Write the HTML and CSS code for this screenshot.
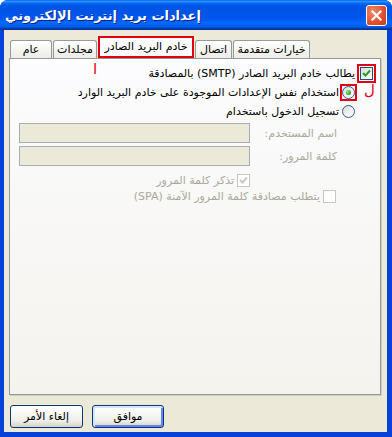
FILE: index.html
```html
<!DOCTYPE html>
<html lang="ar">
<head>
    <meta charset="utf-8">
    <title>إعدادات بريد إنترنت الإلكتروني</title>
    <link rel="stylesheet" href="styles.css">
</head>
<body>
    <div class="window">
        <div class="titlebar">
            <span class="title" dir="rtl">إعدادات بريد إنترنت الإلكتروني</span>
            <button class="close" aria-label="إغلاق">
                <svg width="13" height="13" viewBox="0 0 13 13">
                    <path d="M2.5 2.5 L10.5 10.5 M10.5 2.5 L2.5 10.5" stroke="#fff" stroke-width="2.2" stroke-linecap="square"/>
                </svg>
            </button>
        </div>
        <div class="client">
            <div class="tabs">
                <div class="tab tab-general">عام</div>
                <div class="tab tab-folders">مجلدات</div>
                <div class="tab tab-outgoing active">خادم البريد الصادر</div>
                <div class="tab tab-connection">اتصال</div>
                <div class="tab tab-advanced">خيارات متقدمة</div>
            </div>
            <div class="panel" dir="rtl">
                <span class="note note-alef">ا</span>
                <span class="note note-lam">ل</span>

                <div class="opt opt-check">
                    <span class="mark mark-check">
                        <span class="check">
                            <svg width="9" height="9" viewBox="0 0 9 9"><path d="M1 4 L3.5 6.5 L8 1.5" stroke="#21A121" stroke-width="2" fill="none"/></svg>
                        </span>
                    </span>
                    <span>يطالب خادم البريد الصادر (SMTP) بالمصادقة</span>
                </div>
                <div class="opt opt-radio">
                    <span class="mark mark-radio"><span class="radio on"></span></span>
                    <span>استخدام نفس الإعدادات الموجودة على خادم البريد الوارد</span>
                </div>
                <div class="opt opt-radio">
                    <span class="radio"></span>
                    <span>تسجيل الدخول باستخدام</span>
                </div>

                <div class="field field-user">
                    <span>اسم المستخدم:</span>
                    <span class="input"></span>
                </div>
                <div class="field field-pass">
                    <span>كلمة المرور:</span>
                    <span class="input"></span>
                </div>

                <div class="opt opt-sub opt-remember">
                    <span class="check disabled">
                        <svg width="9" height="9" viewBox="0 0 9 9"><path d="M1 4 L3.5 6.5 L8 1.5" stroke="#CAC8BB" stroke-width="2" fill="none"/></svg>
                    </span>
                    <span>تذكر كلمة المرور</span>
                </div>
                <div class="opt opt-sub opt-spa">
                    <span class="check"></span>
                    <span>يتطلب مصادقة كلمة المرور الآمنة (SPA)</span>
                </div>
            </div>
            <div class="buttons">
                <button class="btn btn-cancel">إلغاء الأمر</button>
                <button class="btn btn-ok">موافق</button>
            </div>
        </div>
    </div>
</body>
</html>
```

FILE: styles.css
```css
body {
    margin: 0;
    background: #ffffff;
    font-family: 'DejaVu Sans', Tahoma, sans-serif;
    font-size: 11px;
    color: #000000;
}

.window {
    width: 392px;
    height: 437px;
    display: flex;
    flex-direction: column;
    background: #0841d9;
    border-radius: 8px 8px 0 0;
    overflow: hidden;
}

.titlebar {
    height: 30px;
    flex: none;
    display: flex;
    align-items: center;
    justify-content: space-between;
    padding: 0 5px;
    background: linear-gradient(#0058ee 0%, #3593ff 4%, #288eff 6%, #127dff 8%, #036ffc 10%,
        #0262ee 14%, #0057e5 20%, #0054e3 24%, #0055eb 56%, #005bf5 66%, #026afe 76%,
        #0062ef 86%, #0052d6 92%, #0040ab 94%, #003092 100%);
}

.title {
    color: #ffffff;
    font-weight: bold;
    font-size: 13px;
    text-shadow: 1px 1px #0f1e89;
}

.close {
    width: 21px;
    height: 21px;
    padding: 0;
    display: flex;
    align-items: center;
    justify-content: center;
    border: 1px solid #ffffff;
    border-radius: 3px;
    background: radial-gradient(circle at 30% 30%, #f0896a, #e2542f 55%, #c4391c);
}

.client {
    flex: 1;
    margin: 0 5px 5px 4px;
    padding: 6px 6px 0 5px;
    background: #ece9d8;
    display: flex;
    flex-direction: column;
}

.tabs {
    height: 22px;
    display: flex;
    align-items: flex-end;
    gap: 1px;
    padding-left: 1px;
}

.tab {
    height: 18px;
    box-sizing: border-box;
    border: 1px solid #919b9c;
    border-bottom: none;
    border-radius: 3px 3px 0 0;
    background: linear-gradient(#ffffff, #ecebe6);
    display: flex;
    align-items: center;
    justify-content: center;
    white-space: nowrap;
}

.tab-general { width: 42px; }
.tab-folders { width: 44px; }
.tab-outgoing { width: 96px; }
.tab-connection { width: 37px; }
.tab-advanced { width: 77px; }

.tab.active {
    height: 22px;
    border: 2px solid #e4000f;
    border-radius: 0;
    background: #fcfcfe;
    padding-bottom: 2px;
}

.panel {
    position: relative;
    height: 337px;
    box-sizing: border-box;
    padding-top: 5px;
    border: 1px solid #919b9c;
    background: linear-gradient(#fcfcfe, #f4f3ee);
    box-shadow: 1px 1px 0 #d0cebf;
}

/* red annotation letters drawn over the screenshot */
.note {
    position: absolute;
    color: #e4000f;
    line-height: 1;
}

.note-alef {
    left: 83px;
    top: 3px;
    font-size: 15px;
}

.note-lam {
    right: 5px;
    top: 24px;
    font-size: 15px;
}

.opt {
    height: 19px;
    display: flex;
    align-items: center;
    gap: 3px;
    white-space: nowrap;
}

.opt-check { padding-right: 7px; gap: 5px; }
.opt-radio { padding-right: 25px; }

.mark {
    display: flex;
    flex: none;
    border: 2px solid #e4000f;
}

.mark-check {
    padding: 1px;
    margin: 0 -3px;
}

.mark-radio {
    margin: 0 -2px;
}

.check {
    width: 13px;
    height: 13px;
    box-sizing: border-box;
    flex: none;
    display: flex;
    align-items: center;
    justify-content: center;
    border: 1px solid #1c5180;
    background: linear-gradient(135deg, #dcdcd7, #ffffff);
}

.check.disabled {
    border-color: #cac8bb;
    background: #ffffff;
}

.radio {
    width: 13px;
    height: 13px;
    box-sizing: border-box;
    flex: none;
    display: flex;
    align-items: center;
    justify-content: center;
    border: 1px solid #2c5c93;
    border-radius: 50%;
    background: linear-gradient(135deg, #dcdcd7, #ffffff);
}

.radio.on::after {
    content: '';
    width: 5px;
    height: 5px;
    border-radius: 50%;
    background: radial-gradient(circle at 35% 35%, #8ce88c, #21a121 70%);
}

.field {
    height: 20px;
    display: grid;
    grid-template-columns: 87px 231px;
    align-items: center;
    padding-right: 43px;
    color: #aca899;
}

.field-user { margin-top: 2px; }
.field-pass { margin-top: 3px; }

.input {
    height: 20px;
    box-sizing: border-box;
    border: 1px solid #a5acb2;
    background: #ece9d8;
}

.opt-sub {
    height: 16px;
    color: #aca899;
}

.opt-remember {
    margin-top: 6px;
    padding-right: 130px;
}

.opt-spa {
    padding-right: 44px;
}

.opt-spa .check {
    border-color: #cac8bb;
    background: #ffffff;
}

.buttons {
    display: flex;
    gap: 9px;
    margin-top: 10px;
    padding-left: 1px;
}

.btn {
    height: 23px;
    padding: 0;
    font-family: 'DejaVu Sans', Tahoma, sans-serif;
    font-size: 11px;
    color: #000000;
    border: 1px solid #003c74;
    border-radius: 3px;
    background: linear-gradient(#ffffff, #f0f0ea 70%, #d6d0c5);
}

.btn-cancel { width: 73px; }

.btn-ok {
    width: 72px;
    box-shadow: inset 1px 1px 0 1px #cee7ff, inset -1px -1px 0 1px #6982ee;
}
```
